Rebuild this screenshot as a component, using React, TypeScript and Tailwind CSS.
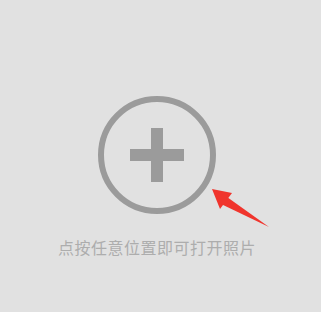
import React from 'react';

const Arrow = () => (
  <svg
    className="absolute left-[205px] top-[182px]"
    width="70"
    height="50"
    viewBox="0 0 70 50"
  >
    <polygon points="7,7 27,11 15,27" fill="#f0342c" />
    <polygon points="22,15 16,22 64,45" fill="#f0342c" />
  </svg>
);

const App = () => {
  return (
    <div
      className="relative w-[321px] h-[312px] bg-[#e1e1e1] overflow-hidden"
      style={{ fontFamily: '"Noto Sans CJK SC", "Noto Sans", sans-serif' }}
    >
      <div className="flex flex-col items-center pt-[96px] pr-[7px]">
        <div className="w-[118px] h-[118px] rounded-full border-[6px] border-[#9b9b9b] flex items-center justify-center">
          <div className="relative w-[54px] h-[54px]">
            <div className="absolute left-0 top-[21px] w-[54px] h-[12px] bg-[#9b9b9b]" />
            <div className="absolute left-[21px] top-0 w-[12px] h-[54px] bg-[#9b9b9b]" />
          </div>
        </div>
        <p className="mt-[21px] text-[16px] leading-[24px] tracking-[0.5px] text-[#adadad]">
          点按任意位置即可打开照片
        </p>
      </div>
      <Arrow />
    </div>
  );
};

export default App;
